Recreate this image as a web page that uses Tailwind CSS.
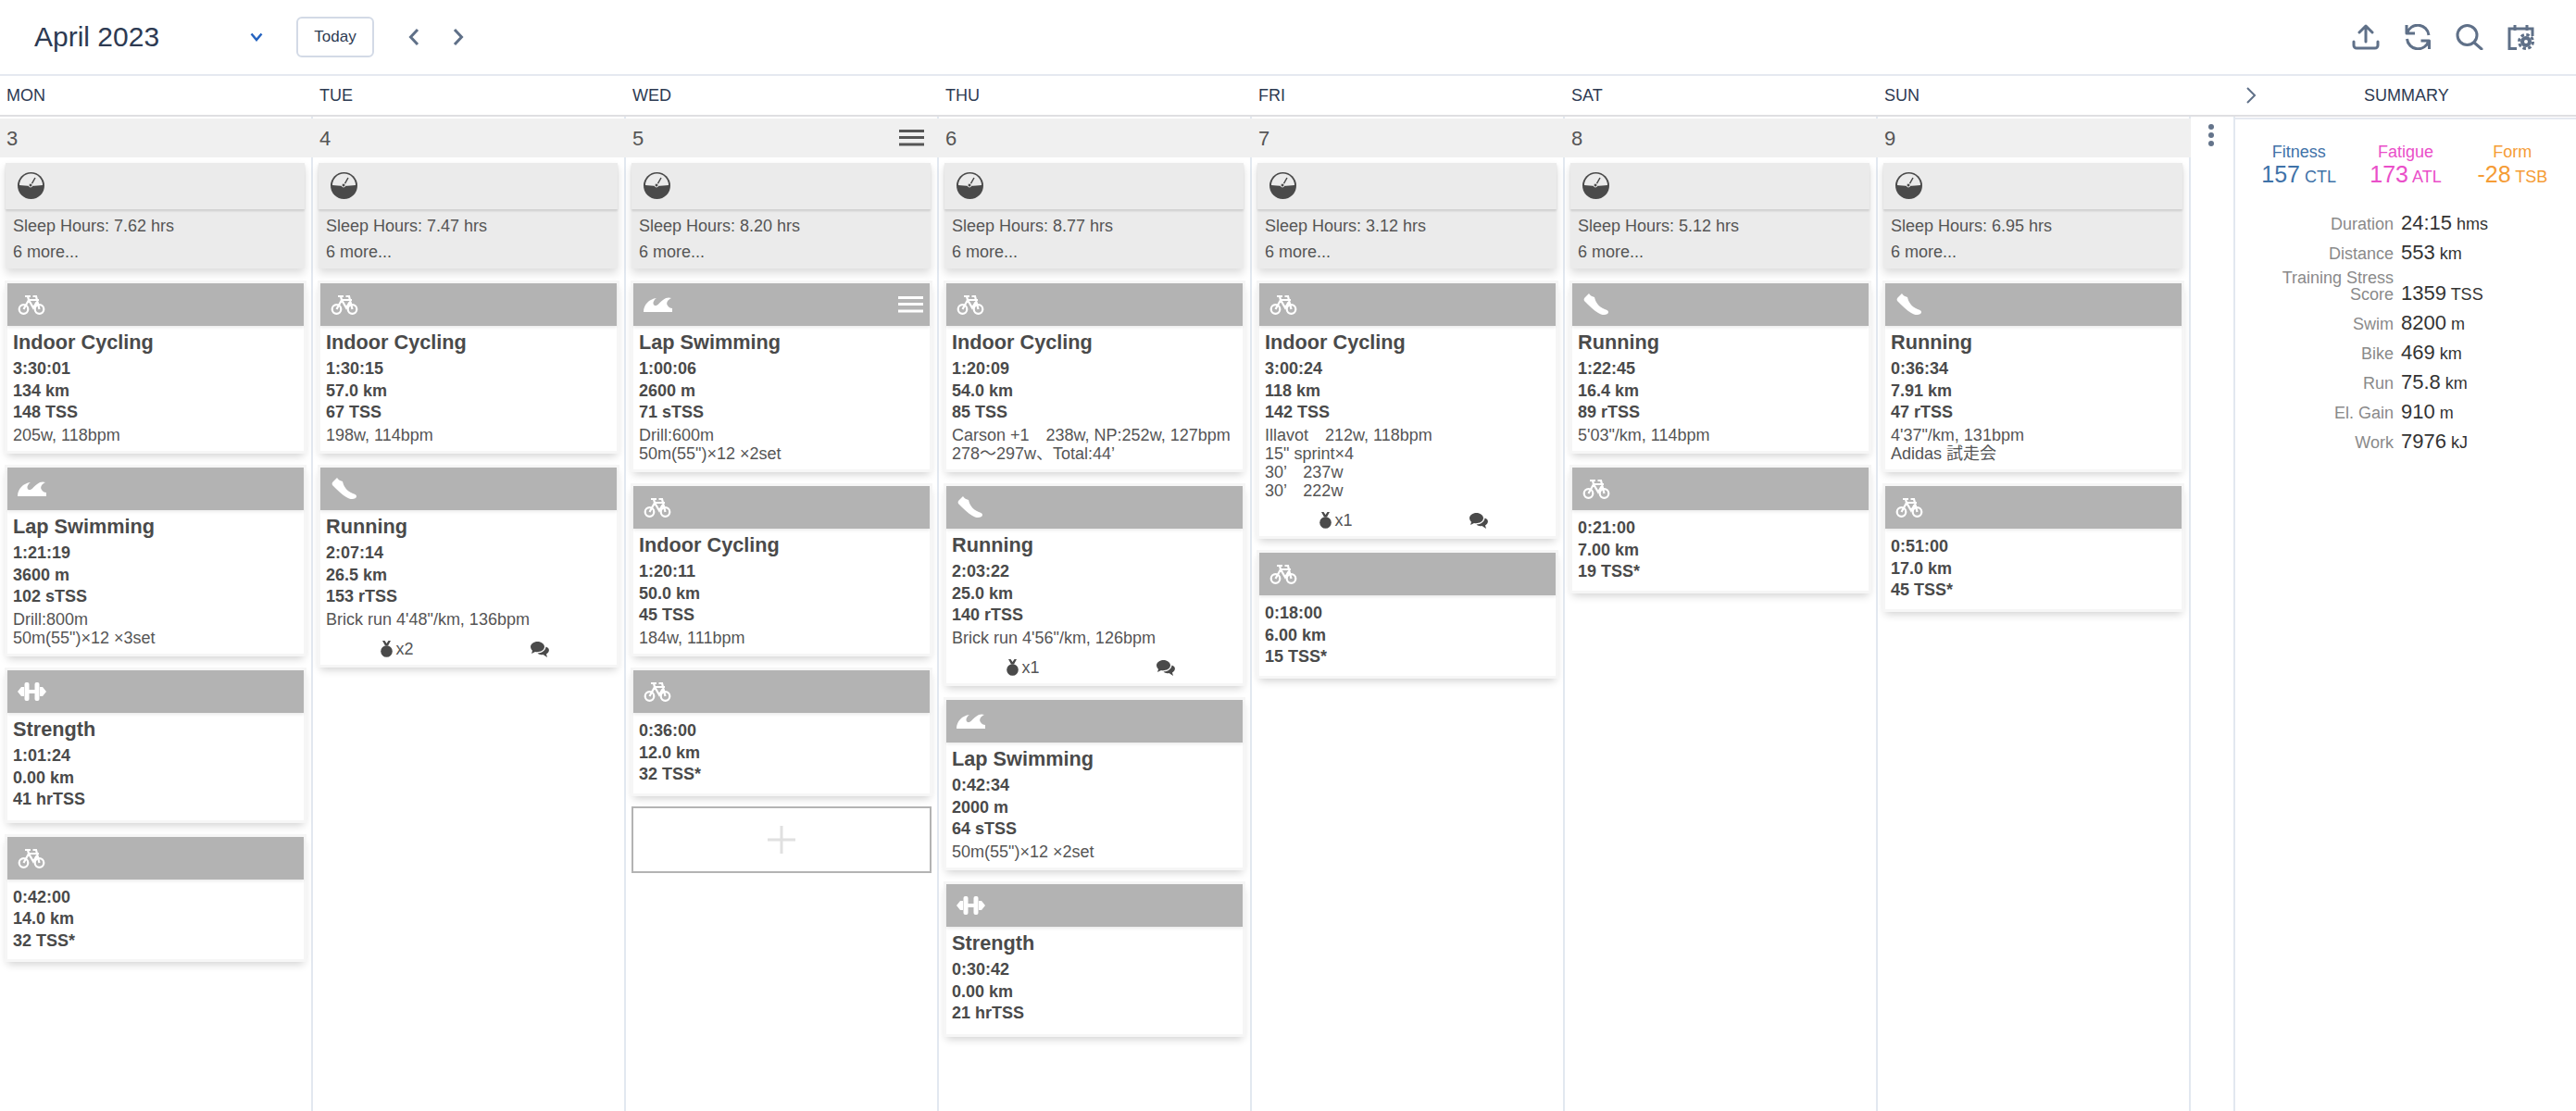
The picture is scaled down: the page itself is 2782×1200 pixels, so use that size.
<html lang="en">
<head>
  <meta charset="UTF-8" />
  <title>Calendar</title>
  <script src="https://cdn.jsdelivr.net/npm/@tailwindcss/browser@4"></script>
</head>
<body class="bg-white h-[1200px] overflow-hidden text-[18px] text-[#555] font-['Liberation_Sans','Noto_Sans_CJK_JP',sans-serif]">
  <!-- Top bar -->
  <header class="h-[82px] border-b-2 border-[#e5e9f0] flex items-center text-[#5f7088]">
    <h1 class="ml-[37px] w-[220px] text-[30px] leading-none text-[#2d3a52]">April 2023</h1>
    <svg class="w-[14px] h-[10px] ml-[13px]" viewBox="0 0 14 10" fill="none" stroke="#2563c0" stroke-width="2.5"><path d="M1.5 1.5 7 8l5.5-6.5" /></svg>
    <button class="ml-[36px] w-[84px] h-[44px] border-2 border-[#d3dae6] rounded-[6px] text-[17px] text-[#2d3a52]">Today</button>
    <svg class="w-[12px] h-[20px] ml-[37px]" viewBox="0 0 12 20" fill="none" stroke="currentColor" stroke-width="3"><path d="M10 2 2.5 10 10 18" /></svg>
    <svg class="w-[12px] h-[20px] ml-[36px]" viewBox="0 0 12 20" fill="none" stroke="currentColor" stroke-width="3"><path d="M2 2l7.5 8L2 18" /></svg>
    <div class="ml-auto mr-[45px] flex items-center gap-[26px]">
      <svg class="w-[30px] h-[28px]" viewBox="0 0 30 28" fill="none" stroke="currentColor" stroke-width="3" stroke-linecap="round" stroke-linejoin="round"><path d="M15 19V2M8 9l7-7 7 7M2 19v4a3 3 0 0 0 3 3h20a3 3 0 0 0 3-3v-4" /></svg>
      <svg class="w-[30px] h-[28px]" viewBox="0 0 30 28" fill="none" stroke="currentColor" stroke-width="3" stroke-linejoin="round"><path d="M3 1v9h9M3.500 10A12 12 0 0 1 27 12M27.500 27v-9h-9M27 18A12 12 0 0 1 3.500 16" /></svg>
      <svg class="w-[30px] h-[28px]" viewBox="0 0 30 28" fill="none" stroke="currentColor" stroke-width="3" stroke-linecap="round"><circle cx="12.500" cy="12" r="10.500" /><path d="M20 20l8 7" /></svg>
      <svg class="w-[29px] h-[28px]" viewBox="0 0 29 28" fill="none" stroke="currentColor" stroke-width="3"><path d="M10 26.500H2V5h25v8M8 1v6M21 1v6" /><circle cx="20" cy="19" r="4" stroke-width="4" /><circle cx="20" cy="19" r="7.500" stroke-width="3" stroke-dasharray="3.500 2.400" /></svg>
    </div>
  </header>

  <!-- Weekdays -->
  <div class="h-[44px] flex items-center border-b-2 border-[#dfdfe2] text-[#2d3a52]">
    <div id="weekdays" class="flex w-[2366px]"></div>
    <svg class="w-[12px] h-[20px] ml-[59px]" viewBox="0 0 12 20" fill="none" stroke="#5f7088" stroke-width="2"><path d="M2 2l8 8-8 8" /></svg>
    <div class="ml-[116px]">SUMMARY</div>
  </div>

  <main class="flex h-[1074px]">
    <div id="days" class="flex"></div>

    <!-- Day row menu -->
    <div class="w-[48px] border-r-2 border-[#e2e8f0] flex flex-col items-center gap-[3px] pt-[8px] pr-[2px]">
      <span class="w-[6px] h-[6px] rounded-full bg-[#64748b]"></span>
      <span class="w-[6px] h-[6px] rounded-full bg-[#64748b]"></span>
      <span class="w-[6px] h-[6px] rounded-full bg-[#64748b]"></span>
    </div>

    <!-- Summary -->
    <aside class="flex-1">
      <div class="mt-[1px] h-[2px] bg-[#e5e9f0]"></div>
      <div class="grid grid-cols-3 px-[11px] pt-[24px] text-center">
        <div class="text-[#3f72a8]">
          <div class="h-[22px] leading-[22px]">Fitness</div>
          <div class="h-[26px] leading-[26px]"><span class="text-[25px]">157</span> CTL</div>
        </div>
        <div class="text-[#ea4fc9]">
          <div class="h-[22px] leading-[22px]">Fatigue</div>
          <div class="h-[26px] leading-[26px]"><span class="text-[25px]">173</span> ATL</div>
        </div>
        <div class="text-[#f59c36]">
          <div class="h-[22px] leading-[22px]">Form</div>
          <div class="h-[26px] leading-[26px]"><span class="text-[25px]">-28</span> TSB</div>
        </div>
      </div>
      <div id="stats" class="mt-[24px]"></div>
    </aside>
  </main>

  <script>
    const bike = `<svg class="w-[30px] h-[24px]" viewBox="0 0 30 24" fill="none" stroke="white" stroke-width="2.200"><circle cx="6.500" cy="17" r="4.800" /><circle cx="23.500" cy="17" r="4.800" /><path d="M6.500 17 12 7h11M23.500 17 20 3h-3.500M12 7l5 8.500 5-8.500M8 3h6M11 3l1 4" /></svg>`;
    const swim = `<svg class="w-[31px] h-[16px]" viewBox="0 0 31 16" fill="white"><path d="M0 16C0 8 6 2 14 1 11 3 9 7 12 9 15 10 17 6 21 3 24 0 28 0 30 1 26 3 24 6 26 9 27 11 29 12 31 12V16Z" /></svg>`;
    const run = `<svg class="w-[29px] h-[24px]" viewBox="0 0 29 24" fill="white"><path d="M2 8C1 6 2 5 3 4L7 0C8 2 10 3 13 4 14 9 17 14 24 17 28 18 29 20 27 22 24 24 20 23 17 21 12 18 7 13 2 8Z" /></svg>`;
    const strength = `<svg class="w-[31px] h-[22px]" viewBox="0 0 31 22" fill="white"><path d="M0 11l4-5h3v10H4ZM31 11l-4-5h-3v10h3Z" /><rect x="7.500" y="1" width="5" height="20" rx="2" /><rect x="18.500" y="1" width="5" height="20" rx="2" /><rect x="12" y="9" width="7" height="4" /></svg>`;
    const gauge = `<svg class="w-[29px] h-[29px]" viewBox="0 0 29 29"><circle cx="14.500" cy="14.500" r="14.500" fill="#4a4a4a" /><path d="M2 14A12.500 12.500 0 0 1 27 14C20 15 9 15 2 14Z" fill="#ebebeb" /><path d="M14.500 14 19 6" stroke="#4a4a4a" stroke-width="1.500" /><circle cx="14" cy="14" r="2" fill="#4a4a4a" stroke="#ebebeb" stroke-width="1" /></svg>`;
    const menu = (color) => `<svg class="w-[27px] h-[18px]" viewBox="0 0 27 18" fill="${color}"><rect y="0" width="27" height="3" /><rect y="7" width="27" height="3" /><rect y="14.500" width="27" height="3" /></svg>`;
    const medal = `<svg class="w-[13px] h-[18px]" viewBox="0 0 13 18" fill="#4a4a4a"><circle cx="6.500" cy="11.500" r="6.300" /><path d="M2 0h2.500l2 3 2-3H11L8 5.500H5Z" /></svg>`;
    const comments = `<svg class="w-[21px] h-[17px]" viewBox="0 0 21 17" fill="#4a4a4a"><path d="M7.500 0C3.500 0 0 2.500 0 5.500 0 7.500 1 8.800 2 9.800L1 13l4-2c4 .8 10-1 10-5.500C15 2.500 11.500 0 7.500 0Z" /><path d="M16.500 5.500c0 3.500-4 7-9 7 1.500 1.700 4 2 6 1.500L18 17l-1-3.500c4-2.500 4-6.500-.5-8Z" /></svg>`;

    // desc lines keep their wide spaces, footer: medals count
    const days = [
      { date: 3, sleep: "7.62", workouts: [
        { icon: bike, title: "Indoor Cycling", stats: ["3:30:01", "134 km", "148 TSS"], desc: ["205w, 118bpm"] },
        { icon: swim, title: "Lap Swimming", stats: ["1:21:19", "3600 m", "102 sTSS"], desc: ["Drill:800m", "50m(55\")×12 ×3set"] },
        { icon: strength, title: "Strength", stats: ["1:01:24", "0.00 km", "41 hrTSS"] },
        { icon: bike, stats: ["0:42:00", "14.0 km", "32 TSS*"] },
      ] },
      { date: 4, sleep: "7.47", workouts: [
        { icon: bike, title: "Indoor Cycling", stats: ["1:30:15", "57.0 km", "67 TSS"], desc: ["198w, 114bpm"] },
        { icon: run, title: "Running", stats: ["2:07:14", "26.5 km", "153 rTSS"], desc: ["Brick run 4'48\"/km, 136bpm"], medals: 2 },
      ] },
      { date: 5, sleep: "8.20", menu: true, add: true, workouts: [
        { icon: swim, menu: true, title: "Lap Swimming", stats: ["1:00:06", "2600 m", "71 sTSS"], desc: ["Drill:600m", "50m(55\")×12 ×2set"] },
        { icon: bike, title: "Indoor Cycling", stats: ["1:20:11", "50.0 km", "45 TSS"], desc: ["184w, 111bpm"] },
        { icon: bike, stats: ["0:36:00", "12.0 km", "32 TSS*"] },
      ] },
      { date: 6, sleep: "8.77", workouts: [
        { icon: bike, title: "Indoor Cycling", stats: ["1:20:09", "54.0 km", "85 TSS"], desc: ["Carson +1　238w, NP:252w, 127bpm", "278〜297w、Total:44’"] },
        { icon: run, title: "Running", stats: ["2:03:22", "25.0 km", "140 rTSS"], desc: ["Brick run 4'56\"/km, 126bpm"], medals: 1 },
        { icon: swim, title: "Lap Swimming", stats: ["0:42:34", "2000 m", "64 sTSS"], desc: ["50m(55\")×12 ×2set"] },
        { icon: strength, title: "Strength", stats: ["0:30:42", "0.00 km", "21 hrTSS"] },
      ] },
      { date: 7, sleep: "3.12", workouts: [
        { icon: bike, title: "Indoor Cycling", stats: ["3:00:24", "118 km", "142 TSS"], desc: ["Illavot　212w, 118bpm", "15\" sprint×4", "30’　237w", "30’　222w"], medals: 1 },
        { icon: bike, stats: ["0:18:00", "6.00 km", "15 TSS*"] },
      ] },
      { date: 8, sleep: "5.12", workouts: [
        { icon: run, title: "Running", stats: ["1:22:45", "16.4 km", "89 rTSS"], desc: ["5'03\"/km, 114bpm"] },
        { icon: bike, stats: ["0:21:00", "7.00 km", "19 TSS*"] },
      ] },
      { date: 9, sleep: "6.95", workouts: [
        { icon: run, title: "Running", stats: ["0:36:34", "7.91 km", "47 rTSS"], desc: ["4'37\"/km, 131bpm", "Adidas 試走会"] },
        { icon: bike, stats: ["0:51:00", "17.0 km", "45 TSS*"] },
      ] },
    ];

    const stats = [
      ["Duration", "24:15", "hms"],
      ["Distance", "553", "km"],
      ["Training Stress Score", "1359", "TSS"],
      ["Swim", "8200", "m"],
      ["Bike", "469", "km"],
      ["Run", "75.8", "km"],
      ["El. Gain", "910", "m"],
      ["Work", "7976", "kJ"],
    ];

    document.getElementById("weekdays").innerHTML = ["MON", "TUE", "WED", "THU", "FRI", "SAT", "SUN"]
      .map((d) => `<div class="w-[338px] pl-[7px]">${d}</div>`)
      .join("");

    function workoutCard(w) {
      return `
        <article class="mx-[8px] mt-[18px] bg-white shadow-[0_0_0_3px_#f6f6f6,0_5px_9px_rgba(0,0,0,0.2)]">
          <div class="h-[46px] bg-[#b3b3b3] shadow-[0_2px_3px_rgba(0,0,0,0.08)] flex items-center justify-between pl-[11px] pr-[7px]">
            ${w.icon}
            ${w.menu ? menu("white") : ""}
          </div>
          <div class="px-[6px] pt-[5px] ${w.title ? "pb-[10px]" : "pb-[8px]"}">
            ${w.title ? `<h3 class="text-[21.700px] leading-[26px] mb-[1px] font-bold text-[#4a4a4a]">${w.title}</h3>` : ""}
            <div class="pt-[3px] font-bold text-[#4a4a4a] leading-[23.500px]">
              ${w.stats.map((s) => `<div>${s}</div>`).join("")}
            </div>
            ${w.desc ? `<div class="mt-[2px] -mb-[2.500px] leading-[20px] whitespace-nowrap">${w.desc.map((l) => `<div>${l}</div>`).join("")}</div>` : ""}
            ${w.medals ? `
              <div class="grid grid-cols-2 h-[32px] items-center mt-[9px] -mb-[9px]">
                <div class="flex items-center justify-center gap-[3px]">${medal}<span>x${w.medals}</span></div>
                <div class="flex justify-center">${comments}</div>
              </div>` : ""}
          </div>
        </article>`;
    }

    document.getElementById("days").innerHTML = days.map((day) => `
      <section class="w-[338px] border-r-2 border-[#e2e8f0]">
        <div class="-mr-[2px] mt-[2px] h-[42px] bg-[#f0f0f0] flex items-center justify-between pl-[7px] pr-[16px] text-[22px] text-[#555]">
          <span>${day.date}</span>
          ${day.menu ? menu("#555") : ""}
        </div>
        <div class="mx-[6px] mt-[6px] w-[323px] h-[114px] bg-[#ebebeb] shadow-[0_5px_9px_rgba(0,0,0,0.14)]">
          <div class="h-[50px] pl-[13px] pt-[10px] shadow-[0_2px_2px_rgba(0,0,0,0.12)]">${gauge}</div>
          <div class="pl-[8px] pt-[4px] leading-[28px]">
            <div>Sleep Hours: ${day.sleep} hrs</div>
            <div>6 more...</div>
          </div>
        </div>
        <div class="-mt-[2px]">${day.workouts.map(workoutCard).join("")}</div>
        ${day.add ? `
          <div class="ml-[6px] mt-[14px] w-[324px] h-[72px] border-2 border-[#b3b3b3] flex items-center justify-center">
            <svg class="w-[30px] h-[30px]" viewBox="0 0 30 30" fill="#e0e0e0"><rect x="13.500" width="3" height="30" /><rect y="13.500" width="30" height="3" /></svg>
          </div>` : ""}
      </section>`).join("");

    document.getElementById("stats").innerHTML = stats.map((s) => `
      <div class="flex [align-items:last_baseline] ${s[0].length > 10 ? "pt-[2px]" : ""}">
        <div class="w-[171px] pl-[46px] text-right leading-[18px] text-[#8a8a8a]">${s[0]}</div>
        <div class="ml-[8px] h-[32px] text-[#333] leading-[32px]"><span class="text-[22px]">${s[1]}</span> ${s[2]}</div>
      </div>`).join("");
  </script>
</body>
</html>
